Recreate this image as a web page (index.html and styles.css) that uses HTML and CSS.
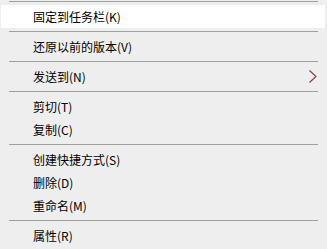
FILE: index.html
```
<!DOCTYPE html>
<html lang="zh-CN">
<head>
<meta charset="utf-8">
<link rel="stylesheet" href="styles.css">
</head>
<body>
<div class="menu">
  <div class="sep top"></div>
  <div class="item active"><span>固定到任务栏(K)</span></div>
  <div class="sep"></div>
  <div class="item"><span>还原以前的版本(V)</span></div>
  <div class="sep"></div>
  <div class="item"><span>发送到(N)</span>
    <svg class="arrow" width="10" height="15" viewBox="0 0 10 15"><polyline points="1.5,1.5 8,7.5 1.5,13.5" fill="none" stroke="#8a3a3a" stroke-width="1.1"/></svg>
  </div>
  <div class="sep"></div>
  <div class="item"><span>剪切(T)</span></div>
  <div class="item"><span>复制(C)</span></div>
  <div class="sep"></div>
  <div class="item"><span>创建快捷方式(S)</span></div>
  <div class="item"><span>删除(D)</span></div>
  <div class="item"><span>重命名(M)</span></div>
  <div class="sep"></div>
  <div class="item"><span>属性(R)</span></div>
</div>
</body>
</html>
```
FILE: styles.css
```
html, body {
  margin: 0;
  padding: 0;
  background: #eeeeee;
}
body {
  width: 327px;
  height: 249px;
  overflow: hidden;
  font-family: "Noto Sans CJK SC", "Noto Sans", sans-serif;
  font-size: 12px;
  color: #000;
}
.menu {
  display: flex;
  flex-direction: column;
}
.sep {
  padding: 3px 9px 3px 9px;
}
.sep.top {
  padding-top: 1px;
}
.sep::before {
  content: "";
  display: block;
  height: 1px;
  background: #a0a0a0;
}
.item {
  display: flex;
  align-items: center;
  height: 23px;
  margin: 0 2px 0 1px;
  padding: 0 7px 0 32px;
  line-height: 23px;
  white-space: nowrap;
}
.item.active {
  background: #ffffff;
}
.arrow {
  margin-left: auto;
  display: block;
}
```
